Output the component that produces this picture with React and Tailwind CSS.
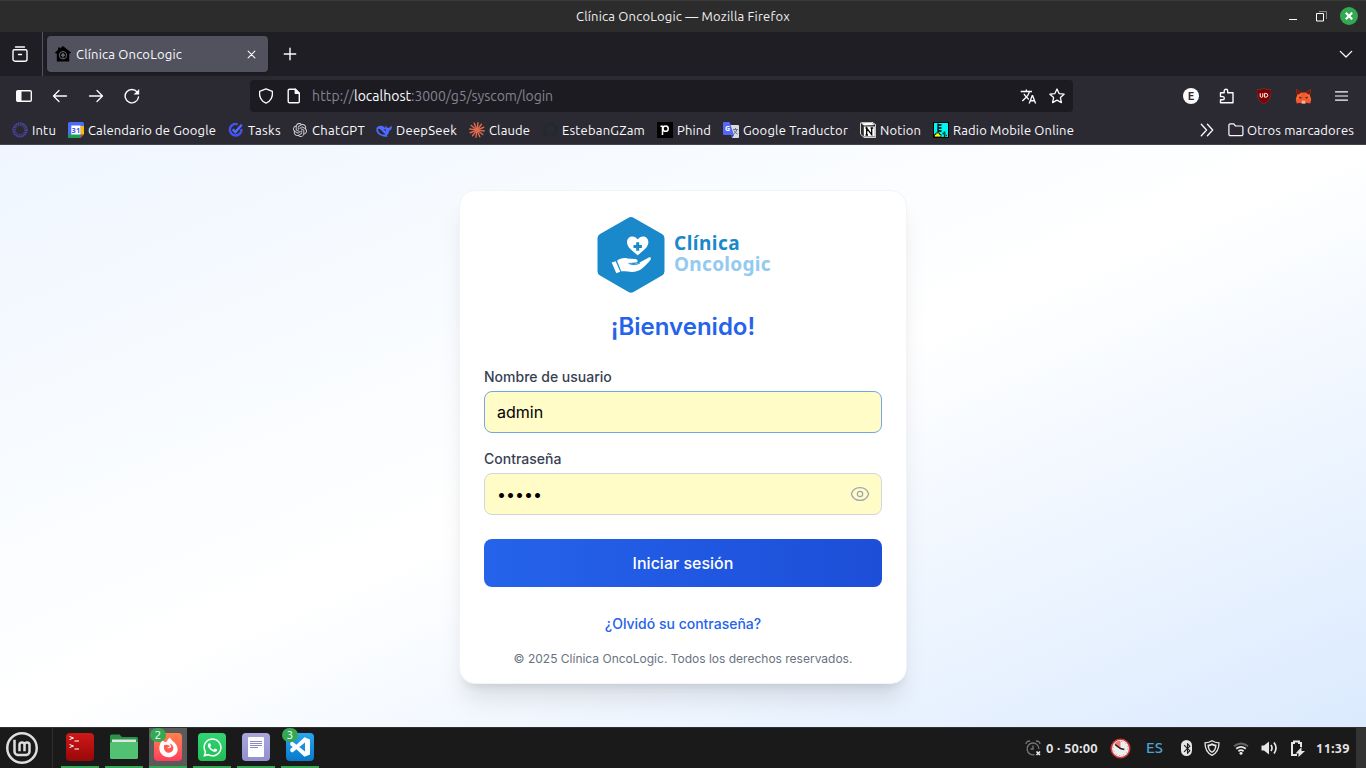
import { useLayoutEffect, useRef, useState } from "react";
import { FaGithub, FaWhatsapp } from "react-icons/fa";
import { SiOpenai, SiLinuxmint } from "react-icons/si";
import { MdTranslate, MdBluetooth } from "react-icons/md";

/* Text whose letter spacing is adjusted so that it fills exactly `w` pixels. */
function Fit({ w, className = "", children }) {
  const ref = useRef(null);
  const [spacing, setSpacing] = useState(0);
  useLayoutEffect(() => {
    const natural = ref.current.getBoundingClientRect().width;
    setSpacing((w - natural) / children.length);
  }, [w, children]);
  return (
    <span ref={ref} className={"inline-block whitespace-pre " + className} style={{ letterSpacing: spacing }}>
      {children}
    </span>
  );
}

function Line({ className = "size-4", width = 1.3, children }) {
  return (
    <svg viewBox="0 0 16 16" className={"shrink-0 " + className} fill="none" stroke="currentColor" strokeWidth={width} strokeLinecap="round" strokeLinejoin="round">
      {children}
    </svg>
  );
}

function TitleBar() {
  return (
    <div className="grid h-8 grid-cols-[1fr_auto_1fr] items-center border-t border-[#3a3a3a] bg-[#2c2c2c] text-[#f0f0f0]">
      <span />
      <Fit w={214} className="text-[13px]">Clínica OncoLogic — Mozilla Firefox</Fit>
      <div className="flex items-center justify-end pr-2">
        <svg viewBox="0 0 10 10" className="mr-[18px] size-[10px]"><path d="M1 7.500h8" stroke="#fff" /></svg>
        <svg viewBox="0 0 11 11" className="mr-[13px] size-[11px]" fill="none"><path d="M3 .5h7.500v7.500" stroke="#888" /><path d="M.5 2.500h7v7.500h-7z" stroke="#fff" /></svg>
        <svg viewBox="0 0 18 18" className="mb-px size-[18px]"><circle cx="9" cy="9" r="9" fill="#35a854" /><path d="m5.800 5.800 6.400 6.400m0-6.400-6.400 6.400" stroke="#fff" strokeWidth="2.200" /></svg>
      </div>
    </div>
  );
}

function TabBar() {
  return (
    <div className="flex h-11 items-center bg-[#1f1e25] text-[#fbfbfe]">
      <div className="flex h-full w-[43px] items-center border-r border-[#55545d] pl-3">
        <Line className="size-4" width={1.4}>
          <path d="M3.500 1h9M2.500 3.700h11a1.500 1.500 0 0 1 1.500 1.500v8a2 2 0 0 1-2 2H3a2 2 0 0 1-2-2v-8a1.500 1.500 0 0 1 1.500-1.500zM6.500 8.500h3" />
        </Line>
      </div>
      <div className="ml-1 flex h-9 w-[221px] items-center rounded-[4px] bg-[#52525e] pr-3 pl-2 shadow">
        <svg viewBox="0 0 16 16" className="size-4">
          <path d="M8 0 16 6.500l-1 1.200-.8-.5V15.500H1.800V7.200l-.8.5L0 6.500l3-2.400V1.500h2v1z" fill="#000" />
          <circle cx="8" cy="9.200" r="3.700" fill="none" stroke="#666671" />
          <path d="M8 7v4.400M5.800 9.200h4.400" stroke="#777783" strokeWidth="1.300" />
        </svg>
        <Fit w={106} className="mt-[2px] ml-[5px] text-[13px]">Clínica OncoLogic</Fit>
        <Line className="ml-auto size-[9px]" width={2}><path d="m2 2 12 12M14 2 2 14" /></Line>
      </div>
      <Line className="ml-[14px] size-4" width={1.400}><path d="M8 2.300v11.400M2.300 8h11.400" /></Line>
      <Line className="mr-[13px] ml-auto size-[14px]" width={1.500}><path d="m1.500 5 6.500 6.500L14.500 5" /></Line>
    </div>
  );
}

function NavBar() {
  return (
    <div className="flex h-10 shrink-0 items-center bg-[#2b2a33] text-[#fbfbfe]">
      <svg viewBox="0 0 16 12" className="ml-4 h-3 w-4"><rect x=".7" y=".7" width="14.600" height="10.600" rx="1.200" fill="none" stroke="currentColor" strokeWidth="1.400" /><path d="M1 1h4.500v10H1z" fill="currentColor" /></svg>
      <Line className="ml-5 size-4"><path d="M14.500 8H1.500M7 2.500 1.500 8 7 13.500" /></Line>
      <Line className="ml-5 size-4"><path d="M1.500 8h13M9 2.500 14.500 8 9 13.500" /></Line>
      <svg viewBox="0 0 16 16" className="ml-5 size-4"><path d="M13.200 4.100A6.700 6.700 0 1 0 14.500 9" fill="none" stroke="currentColor" strokeWidth="1.400" strokeLinecap="round" /><path d="M15.200 1v5.400H9.600z" fill="currentColor" /></svg>
      <div className="ml-[110px] flex h-8 w-[823px] items-center rounded-[4px] bg-[#1c1b22] px-2">
        <Line><path d="M8 .8 14.400 3.400c.5 5.400-1.600 9.800-6.400 11.800C3.200 13.200 1.100 8.800 1.600 3.400z" /></Line>
        <Line className="ml-3 size-4" width={1.400}><path d="M3.500 1.200h5.800l4 4v8.300a1.300 1.300 0 0 1-1.300 1.300H3.500a1.300 1.300 0 0 1-1.300-1.300v-11a1.300 1.300 0 0 1 1.300-1.300z" /><path d="M9.300 1.200v4h4z" fill="currentColor" /></Line>
        <div className="ml-[10px] flex text-[14px] text-[#85848e]">
          <Fit w={42}>http://</Fit>
          <Fit w={57} className="text-[#fbfbfe]">localhost</Fit>
          <Fit w={142}>:3000/g5/syscom/login</Fit>
        </div>
        <MdTranslate className="mr-3 ml-auto size-[17px]" />
        <Line><path d="m8 1 2.100 4.600 5 .6-3.700 3.400 1 5L8 12.100l-4.400 2.500 1-5L.9 6.200l5-.6z" /></Line>
      </div>
      <div className="mr-4 ml-auto flex items-center">
        <div className="mr-5 grid size-4 place-items-center rounded-full bg-[#fbfbfe] text-[11px] leading-none font-bold text-[#2b2a33]">E</div>
        <Line className="mr-[22px] size-4" width={1.400}><path d="M1.500 7V4.800h3.700V3a1.700 1.700 0 0 1 3.500 0v1.800H14v10H1.500v-3h2.200a1.600 1.600 0 0 0 0-3.200H1.500z" /></Line>
        <div className="mr-6 flex h-4 w-[14px] items-center justify-center">
          <svg viewBox="0 0 14 16" className="h-4 w-[14px]"><path d="M7 0c2 1.300 4.300 1.800 7 1.800 0 6-.3 10.700-7 14.200C.3 12.500 0 7.800 0 1.800 2.700 1.800 5 1.300 7 0z" fill="#800000" stroke="#6e5050" strokeWidth=".5" /><path d="M3.200 5.200v3q0 1.100 1.300 1.100t1.300-1.100v-3M7.600 5.400h1.200q2 .1 2 1.900t-2 1.900H7.600z" fill="none" stroke="#fff" strokeWidth="1" /></svg>
        </div>
        <svg viewBox="0 0 16 16" className="mr-[23px] size-[17px]">
          <path d="m1 1 5 3.200h4L15 1l-1 6 1.300 4-1 3.500-3.500-.7L9.500 15h-3l-1.300-1.200-3.500.7-1-3.500L2 7z" fill="#f5592a" />
          <path d="m1 1 5 3.200-2 2.300-2.300-.8zM15 1l-5 3.200 2 2.300 2.300-.8z" fill="#7a1614" />
          <path d="m2 7 4-2.500L5 10l-4 1zM14 7l-4-2.500L11 10l4 1z" fill="#ff6a2e" />
          <path d="m3.700 8 2.900 1.100-2 1zM12.300 8l-2.900 1.100 2 1z" fill="#23222b" /><path d="M6.200 12h3.600l-.4 2.300H6.600z" fill="#c9c2ca" />
        </svg>
        <svg viewBox="0 0 14 12" className="mr-[2px] h-3 w-[13px]"><path d="M.5 1.500h13M.5 6h13M.5 10.500h13" stroke="currentColor" strokeWidth="1.300" strokeLinecap="round" /></svg>
      </div>
    </div>
  );
}

const RAYS = Array.from({ length: 12 }, (_, i) => i * 30);

const favicons = {
  intu: (
    <svg viewBox="0 0 16 16" className="size-4" fill="none" stroke="#5550c8"><circle cx="8" cy="8" r="6.600" strokeWidth="2" strokeDasharray="1.300 .6" opacity=".85" /><circle cx="8" cy="8" r="4.700" strokeWidth="1.200" strokeDasharray=".9 .9" opacity=".8" /></svg>
  ),
  calendar: (
    <svg viewBox="0 0 16 16" className="size-4"><rect width="16" height="16" rx="1.500" fill="#4c6bf5" /><path d="M12.500 4H16v8.500h-3.500z" fill="#fbbc04" /><path d="M0 12.500h12.500V16H1.500A1.500 1.500 0 0 1 0 14.500z" fill="#16a34a" /><path d="M12.500 12.500H16L12.500 16z" fill="#ea4335" /><path d="M16 12.500V16h-3.500z" fill="#2b2a33" /><path d="M3.300 3.500h9.200v9H3.300z" fill="#fff" /><text x="7.900" y="11" fontSize="7.500" fontWeight="700" textAnchor="middle" fill="#3d5bf0" fontFamily="Noto Sans">31</text></svg>
  ),
  tasks: (
    <svg viewBox="0 0 16 16" className="size-4" fill="none"><path d="M9.700 2.300A5.800 5.800 0 1 0 13.400 7" stroke="#4453ef" strokeWidth="2.400" /><path d="m4.700 7.300 2.700 2.800 6.300-7.300" stroke="#4d68ff" strokeWidth="2.500" /></svg>
  ),
  openai: <SiOpenai className="size-[14px] text-[#d5d5d8]" />,
  deepseek: (
    <svg viewBox="0 0 16 16" className="size-4"><path d="M10 3.300c.1 2 1.200 2.700 2.700 2.500 1.300-.3 1.900-1.300 3-2.100.5 2.600-.6 4.700-2.500 5-.2 2.200-1.100 3.600-2.500 4.700l1.300.8c-3 1-5.300.6-7.300-.6C1.800 12.400.2 9.700.3 7.500c.2-3.200 3.200-4.400 6.200-3.400 1.300.6 2 1.500 3 2.500-.5-1.300-.3-2.400.5-3.300z" fill="#4d6bfe" /><path d="M2 7c3-1 4.500 4 7.500 5.200C5 13.500 2 10.500 2 7zM7.500 7q2.500 0 3 2.300l-2-1z" fill="#2b2a33" /></svg>
  ),
  claude: (
    <svg viewBox="0 0 16 16" className="size-4">{RAYS.map((r) => <path key={r} d="M8 7.500V.7" transform={`rotate(${r + 8} 8 8)`} stroke="#e06b4e" strokeWidth="1.400" strokeLinecap="round" />)}</svg>
  ),
  github: <FaGithub className="size-4 text-[#24292e]" />,
  phind: (
    <svg viewBox="0 0 16 16" className="size-4"><path d="M0 0h16v16H0z" fill="#000" /><path d="M3.500 4.200h2V13" fill="none" stroke="#fff" strokeWidth="1.500" /><circle cx="8.600" cy="6.700" r="2.600" fill="none" stroke="#fff" strokeWidth="1.500" /></svg>
  ),
  translate: (
    <svg viewBox="0 0 16 16" className="size-4"><path d="M7 3h8a1 1 0 0 1 1 1v11a1 1 0 0 1-1 1H9z" fill="#dadbe0" /><path d="M10 7.500h5M12.500 6v1.500M14 7.500q-1 3.500-3.500 4.500M11 8.500q1.500 3 3.500 3.500" stroke="#64737c" fill="none" /><path d="M1 0h5.500L11 13H1a1 1 0 0 1-1-1V1a1 1 0 0 1 1-1z" fill="#5468f5" /><path d="m8 13 3 0-2 3z" fill="#3446bf" /><text x="4.500" y="8.800" fontSize="7" fontWeight="700" textAnchor="middle" fill="#fff" fontFamily="Noto Sans">G</text></svg>
  ),
  notion: (
    <svg viewBox="0 0 16 16" className="size-4"><path d="M1.500.3 12 .2l3.700 2.500v12.700H4L.4 12V1.200z" fill="#2a2a2a" stroke="#fff" strokeWidth=".9" /><path d="M1 1.200 11.800.8 14.500 3 4 3.600z" fill="#fff" /><path d="M3.800 4.500h11v10h-11z" fill="#fff" /><path d="M6.700 12.800V6.200l5 6.500V6M5.500 6h2M10.500 6h2.700M5.500 13h2.500" fill="none" stroke="#000" strokeWidth="1.300" /></svg>
  ),
  radio: (
    <svg viewBox="0 0 16 16" className="size-4"><path d="M0 0h16v16H0z" fill="#000" /><path d="M1 1h14v14H1z" fill="#00f5f5" /><path d="M5 1.500v9M8.500 3H5M8.500 6H5M8.500 9H5" stroke="#000" strokeWidth="1.300" /><path d="M1.500 15v-2.500h1.300V11h3.700v1.500H8V15z" fill="#ff0" stroke="#000" strokeWidth=".8" /><path d="M11.500 9.500v5.500M9.500 11.500h3M11 13.500h3" stroke="#003c10" strokeWidth="1.500" strokeDasharray="1.500 .6" /></svg>
  ),
};

const bookmarks = [
  { id: "intu", label: "Intu", w: 24, cell: "w-[56px]" },
  { id: "calendar", label: "Calendario de Google", w: 128, cell: "w-[160px]" },
  { id: "tasks", label: "Tasks", w: 33, cell: "w-[64px]" },
  { id: "openai", label: "ChatGPT", w: 53, cell: "w-[84px]" },
  { id: "deepseek", label: "DeepSeek", w: 61, cell: "w-[93px]" },
  { id: "claude", label: "Claude", w: 41, cell: "w-[73px]" },
  { id: "github", label: "EstebanGZam", w: 83, cell: "w-[115px]" },
  { id: "phind", label: "Phind", w: 34, cell: "w-[66px]" },
  { id: "translate", label: "Google Traductor", w: 105, cell: "w-[137px]" },
  { id: "notion", label: "Notion", w: 41, cell: "w-[73px]" },
  { id: "radio", label: "Radio Mobile Online", w: 121, cell: "w-[141px]" },
];

function BookmarksBar() {
  return (
    <div className="flex h-[29px] shrink-0 items-center border-b border-[#45444c] bg-[#2b2a33] pr-3 pl-3 text-[13px] text-[#fbfbfe]">
      {bookmarks.map((b) => (
        <div key={b.id} className={"flex shrink-0 items-center gap-1 " + b.cell}>
          <span className="grid size-4 shrink-0 place-items-center">{favicons[b.id]}</span>
          <Fit w={b.w} className="pt-[2px]">{b.label}</Fit>
        </div>
      ))}
      <div className="ml-auto flex items-center">
        <Line className="mr-[14px] size-[14px]" width={1.500}><path d="m1.500 1.500 6 6.500-6 6.500M8.500 1.500l6 6.500-6 6.500" /></Line>
        <Line className="mr-[3px] size-4" width={1.200}><path d="M2.300 1.800h3.400L7.500 4h6a1.400 1.400 0 0 1 1.400 1.400v6.900a1.400 1.400 0 0 1-1.400 1.400H2.300A1.400 1.400 0 0 1 .9 12.300V3.200a1.400 1.400 0 0 1 1.400-1.400z" /></Line>
        <Fit w={107} className="pt-[2px]">Otros marcadores</Fit>
      </div>
    </div>
  );
}

function ClinicLogo() {
  return (
    <div className="mx-auto flex h-[77px] w-[172px] items-center">
      <svg viewBox="0 -1 68 77" className="h-[77px] w-[68px] shrink-0">
        <path d="M31.500.8a5 5 0 0 1 5 0l28.500 16.200a5 5 0 0 1 2.500 4.300v33a5 5 0 0 1-2.500 4.300L36.500 75.100a5 5 0 0 1-5 0L3 58.600A5 5 0 0 1 .5 54.300v-33A5 5 0 0 1 3 17z" fill="#1989cb" />
        <path d="M40.700 38.300C35.500 34 30 30.300 30 25.300c0-6.400 7.800-7.600 10.700-2.700 2.900-4.900 10.700-3.700 10.700 2.700 0 5-5.500 8.700-10.700 13z" fill="#fff" />
        <path d="M40.700 25.300v8.400M36.500 29.500h8.400" stroke="#1989cb" strokeWidth="3" />
        <path d="m14.700 45.500 4-1.300 4.600 10.500-4 1.600z" fill="#fff" />
        <path d="M20 43.800c3-2.600 7-3.400 10.700-2.300l7.500.4c3.200.4 3.300 3.300.5 3.600l-6.700.5c3.500 1.500 7.600 1.200 10.600-.5l8.800-4.800c2.400-1.100 3.300.8 1.800 2.500-4.500 5.500-8.500 9.700-14.300 11.300-4.500 1.200-10.300-.7-14.700-.2z" fill="#fff" />
        <path d="M31.500 46.200c3.500 2 8 1.700 11.500-.3" fill="none" stroke="#1989cb" strokeWidth="1" />
      </svg>
      <div className="mb-[2px] ml-[9px] flex flex-col items-start font-['Noto_Sans',sans-serif] text-[19px] leading-[21px] font-bold">
        <Fit w={66} className="text-[#1989cb]">Clínica</Fit>
        <Fit w={97} className="text-[#93caf0]">Oncologic</Fit>
      </div>
    </div>
  );
}

function LoginPage() {
  return (
    <main className="flex min-h-0 flex-1 justify-center bg-linear-to-br from-[#eff6ff] via-white to-[#dbeafe] pt-[45px] font-['Inter',sans-serif]">
      <div className="h-[494px] w-[448px] rounded-2xl border border-gray-100 bg-white px-6 pt-[25px] shadow-xl">
        <ClinicLogo />
        <h1 className="mt-[18px] text-center text-2xl font-semibold text-[#2563eb]">¡Bienvenido!</h1>
        <div className="mt-6 text-sm font-medium text-[#374151]">Nombre de usuario</div>
        <div className="mt-1 flex h-[42px] items-center rounded-lg border border-[#76a5e8] bg-[#fffcc8] px-3 text-base text-black">admin</div>
        <div className="mt-4 text-sm font-medium text-[#374151]">Contraseña</div>
        <div className="mt-1 flex h-[42px] items-center justify-between rounded-lg border border-gray-300 bg-[#fffcc8] px-3 text-base text-black">
          <Fit w={45} className="pb-px">•••••</Fit>
          <svg viewBox="0 0 20 20" className="-mr-px size-5" fill="none" stroke="#9ca3af" strokeWidth="1.200">
            <path d="M1.400 10C2.500 6.200 5.900 3.600 10 3.600s7.500 2.600 8.600 6.400c-1.100 3.800-4.500 6.400-8.600 6.400S2.500 13.800 1.400 10z" />
            <circle cx="10" cy="10" r="2.700" />
          </svg>
        </div>
        <div className="mt-6 grid h-12 place-items-center rounded-lg bg-linear-to-r from-[#2563eb] to-[#1d4ed8] text-base font-medium text-white">Iniciar sesión</div>
        <div className="mt-[27px] text-center text-sm font-medium text-[#2563eb]">¿Olvidó su contraseña?</div>
        <div className="mt-[17px] text-center text-xs text-gray-500">© 2025 Clínica OncoLogic. Todos los derechos reservados.</div>
      </div>
    </main>
  );
}

const appIcons = {
  terminal: (
    <div className="size-7 rounded-[4px] bg-linear-to-b from-[#d01818] to-[#980808] pt-[2px] pl-[3px]">
      <svg viewBox="0 0 12 16" className="h-4 w-3" fill="none" stroke="#fff" strokeWidth="1"><path d="m.5 1.500 4 1.500-4 1.500M5.500 6H10M.5 9.500l4 1.500-4 1.500M5.500 14H10" /></svg>
    </div>
  ),
  files: (
    <svg viewBox="0 0 28 28" className="size-7"><path d="M0 3a1.500 1.500 0 0 1 1.500-1.500h8L12 4h14.500A1.500 1.500 0 0 1 28 5.500V12H0z" fill="#289447" /><path d="M2 6.500h24v5H2z" fill="#e4e4e4" /><path d="M0 9.500 3 9h25v15.500A1.500 1.500 0 0 1 26.500 26h-25A1.500 1.500 0 0 1 0 24.500z" fill="#50c271" /></svg>
  ),
  firefox: (
    <div className="grid size-7 place-items-center rounded-[4px] bg-linear-to-b from-[#ff814a] to-[#ff3b5c]">
      <svg viewBox="0 0 22 22" className="size-[21px]"><path d="M2.300 7.200 4.500 3l2.300 2.300q1.400-.5 2.700-.3C9.800 3 11 1.500 12.700.6c.5 2.800 4.400 4.200 6.200 7.300C23.500 15 18 21.300 11 21.300 4.500 21.300-.8 14.700 2.300 7.200z" fill="#fff" /><path d="M6.500 8.500 9 8l3.500 1.200-.8 1.400-2.200.9c1.800.7 3.300 0 4.500-1.300l-1.500-3.400c3 1.200 4.300 4 3.300 6.600-1 2.600-3.800 3.700-6.300 2.800-2.700-1-4-4.200-3-7.700z" fill="#ff5a53" /></svg>
    </div>
  ),
  whatsapp: (
    <div className="grid size-7 place-items-center rounded-[4px] bg-linear-to-b from-[#30d672] to-[#22bd57]"><FaWhatsapp className="size-[21px] text-white" /></div>
  ),
  notes: (
    <div className="grid size-7 place-items-center rounded-[4px] bg-linear-to-b from-[#aaa6dc] to-[#9290d0]">
      <svg viewBox="0 0 16 20" className="h-5 w-4"><rect width="16" height="20" rx="1" fill="#fff" /><path d="M2 4.500h12M2 6.500h12M2 8.500h12M2 10.500h8" stroke="#8a87c4" /></svg>
    </div>
  ),
  code: (
    <div className="grid size-7 place-items-center rounded-[4px] bg-linear-to-b from-[#26a7f2] to-[#0879cb]">
      <svg viewBox="0 0 20 20" className="size-5"><path fillRule="evenodd" d="M14.500.3 20 2.500v15l-5.500 2.200L6.400 12.300l-4 3.300L.3 14.300V12L2.700 10 .3 8V5.700l2.100-1.300 4 3.300zM15 5.500 9.300 10l5.700 4.500z" fill="#fff" /></svg>
    </div>
  ),
};

const tasks = [
  { id: "terminal" },
  { id: "files" },
  { id: "firefox", count: 2, active: true },
  { id: "whatsapp" },
  { id: "notes" },
  { id: "code", count: 3 },
];

function Taskbar() {
  return (
    <div className="flex h-[41px] shrink-0 items-center border-t border-[#303030] bg-[#1a1a1a] text-[#e6e6e6]">
      <div className="flex h-full w-[53px] items-center border-r border-[#2e2e2e] pl-[6px]">
        <SiLinuxmint className="size-8 text-[#dedede]" />
      </div>
      <div className="ml-2 flex h-full gap-[6px]">
        {tasks.map((t) => (
          <div key={t.id} className={"relative flex h-full w-[38px] justify-center border-b-2 border-[#35a854] pt-[5px] " + (t.active ? "bg-[#5a5a5a]" : "")}>
            {appIcons[t.id]}
            {t.count && <span className="absolute top-0 left-[1px] grid h-[14px] w-4 place-items-center rounded-full bg-[#35a854] text-[12px] leading-none text-white">{t.count}</span>}
          </div>
        ))}
      </div>
      <div className="ml-auto flex h-full items-center">
        <svg viewBox="0 0 16 16" className="mr-[5px] size-4" fill="none" stroke="#777"><path d="M9.500 14.600A5.900 5.900 0 1 1 13.900 9" strokeWidth="1.300" /><path d="M1 4q0-3 4-3M15 4q0-3-4-3M8 5.500V9H5.500" strokeWidth="1.300" /><path d="m11.500 11.500 3.500 3.500m0-3.500L11.500 15" stroke="#eee" strokeWidth="1.600" /></svg>
        <Fit w={52} className="pt-px text-[13px] font-semibold">0 · 50:00</Fit>
        <svg viewBox="0 0 22 22" className="ml-3 size-[21px]"><circle cx="11" cy="11" r="9.700" fill="#eee" stroke="#d93434" strokeWidth="1.700" /><path d="M11 11V3A8 8 0 0 0 4.500 6.500z" fill="#f47a72" /><circle cx="11" cy="11" r="7.500" fill="none" stroke="#999" strokeWidth="1" strokeDasharray="1 3" /><path d="m5.500 7 5.500 4 4 1" fill="none" stroke="#222" strokeWidth="1.600" /></svg>
        <Fit w={17} className="ml-[15px] text-[15px] font-medium text-[#4aa3d2]">ES</Fit>
        <span className="ml-[18px] grid h-4 w-[11px] place-items-center rounded-full bg-[#e6e6e6] text-[#1a1a1a]"><MdBluetooth className="size-[13px]" /></span>
        <svg viewBox="0 0 16 16" className="ml-3 size-4"><path d="M8 .8q3 2 7 2C15 8.500 13.500 13 8 15.300 2.500 13 1 8.500 1 2.800q4 0 7-2z" fill="none" stroke="#e6e6e6" strokeWidth="1.300" /><path d="M8 3.300q2 1.300 4.600 1.400c-.2 4-1.400 6.700-4.600 8.300-3.200-1.600-4.400-4.300-4.600-8.300Q6 4.600 8 3.300z" fill="#e6e6e6" /><path d="M8 5.200q1.400.8 3 1c-.3 2.600-1.200 4.200-3 5.300-1.800-1.100-2.700-2.700-3-5.300q1.600-.2 3-1z" fill="#1a1a1a" /></svg>
        <svg viewBox="0 0 16 13" className="ml-[13px] h-[13px] w-4" fill="none" strokeWidth="1.800"><path d="M1 4.200q7-5.500 14 0" stroke="#666" /><path d="M3.200 6.800q4.800-3.700 9.600 0M5.400 9.200q2.600-2 5.200 0" stroke="#e6e6e6" /><circle cx="8" cy="11.300" r="1.500" fill="#e6e6e6" /></svg>
        <svg viewBox="0 0 17 14" className="ml-3 h-[14px] w-[17px]" fill="none" stroke="#e6e6e6" strokeWidth="1.700"><path d="M.5 4.500H3L8 .5v13L3 9.500H.5z" fill="#e6e6e6" stroke="none" /><path d="M10 4q2 3 0 6M13 1.500q4 5.500 0 11" /></svg>
        <svg viewBox="0 0 15 17" className="ml-3 h-[17px] w-[15px]"><path d="M7 15H2V3h2V1.500h5V3h2v4" fill="none" stroke="#e6e6e6" strokeWidth="2" /><path d="M11.500 7v4H15L8.500 17v-3.500H5.500z" fill="#e6e6e6" /></svg>
        <Fit w={34} className="ml-[11px] pt-px text-[13px] font-semibold">11:39</Fit>
        <div className="ml-[6px] h-full w-[10px] bg-[#333]" />
      </div>
    </div>
  );
}

export default function App() {
  return (
    <div className="flex h-[768px] w-[1366px] flex-col overflow-hidden font-['Ubuntu','Noto_Sans',sans-serif]">
      <TitleBar />
      <TabBar />
      <NavBar />
      <BookmarksBar />
      <LoginPage />
      <Taskbar />
    </div>
  );
}
